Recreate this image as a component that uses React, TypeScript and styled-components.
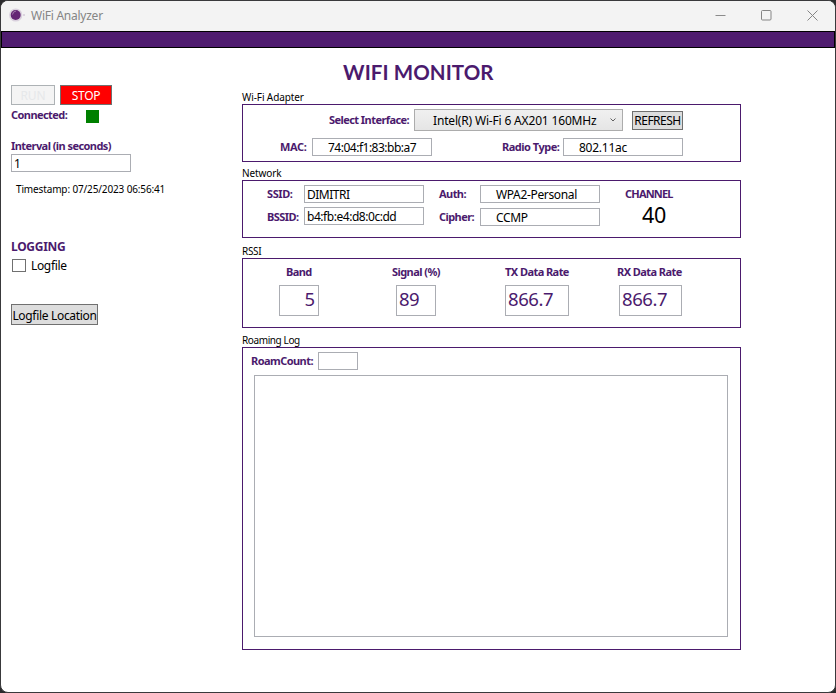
import React from "react";
import styled, { createGlobalStyle } from "styled-components";

const PURPLE = "#4b1a6d";

const GlobalStyle = createGlobalStyle`
  *, *::before, *::after { box-sizing: border-box; }
  html, body { margin: 0; padding: 0; background: #2b2b2d; overflow: hidden; }
  body { font-family: "Noto Sans", "Open Sans", sans-serif; font-size: 12px; color: #000; }
`;

const Window = styled.div`
  width: 836px;
  height: 693px;
  display: flex;
  flex-direction: column;
  border: 1px solid #39393b;
  border-radius: 8px;
  background: #fff;
  overflow: hidden;
`;

const TitleBar = styled.header`
  height: 30px;
  flex: none;
  display: flex;
  align-items: center;
  background: #f3f3f3;
  color: #858585;
  padding-left: 8px;
`;

const AppIcon = styled.svg`
  width: 17px;
  height: 16px;
  margin-right: 5px;
  margin-top: -2px;
`;

const WindowTitle = styled.span`
  flex: 1;
  font-size: 12px;
  line-height: 16px;
  letter-spacing: -0.25px;
`;

const WindowButton = styled.span`
  width: 46px;
  display: flex;
  justify-content: center;
  padding-left: 1px;
  padding-bottom: 1px;

  svg { display: block; }
`;

const Banner = styled.div`
  height: 17px;
  flex: none;
  background: #4f1c6f;
  border: 1px solid #000;
`;

const Body = styled.main`
  display: flex;
  flex: 1;
`;

const Sidebar = styled.aside`
  width: 241px;
  padding: 37px 0 0 10px;
`;

const Content = styled.section`
  width: 499px;
`;

type RowProps = { $h: number; $mt?: number; $align?: string };

const Row = styled.div<RowProps>`
  display: flex;
  align-items: ${(p) => p.$align ?? "center"};
  height: ${(p) => p.$h}px;
  margin-top: ${(p) => p.$mt ?? 0}px;
`;

type TextProps = { $w?: number; $ml?: number; $ls?: number; $size?: number; $mt?: number };

const Label = styled.span<TextProps>`
  flex: none;
  display: block;
  width: ${(p) => (p.$w ? `${p.$w}px` : "auto")};
  margin-left: ${(p) => p.$ml ?? 0}px;
  margin-top: ${(p) => p.$mt ?? 0}px;
  font-family: "Noto Sans", sans-serif;
  font-weight: 700;
  font-size: ${(p) => p.$size ?? 11}px;
  line-height: 16px;
  letter-spacing: ${(p) => p.$ls ?? -0.56}px;
  color: ${PURPLE};
  white-space: nowrap;
`;

const Text = styled.span<TextProps>`
  display: block;
  margin-left: ${(p) => p.$ml ?? 0}px;
  margin-top: ${(p) => p.$mt ?? 0}px;
  font-size: ${(p) => p.$size ?? 12}px;
  line-height: 16px;
  letter-spacing: ${(p) => p.$ls ?? -0.1}px;
  white-space: nowrap;
`;

const Heading = styled.h1`
  margin: 13px 0 0 101px;
  height: 23px;
  font-family: Lato, sans-serif;
  font-weight: 700;
  font-size: 20.5px;
  line-height: 23px;
  letter-spacing: 0.08px;
  color: ${PURPLE};
  white-space: nowrap;
`;

type FieldProps = { $w: number; $h?: number; $ml?: number; $mt?: number; $pad?: number; $ls?: number };

const Field = styled.div<FieldProps>`
  flex: none;
  width: ${(p) => p.$w}px;
  height: ${(p) => p.$h ?? 18}px;
  margin-left: ${(p) => p.$ml ?? 0}px;
  margin-top: ${(p) => p.$mt ?? 0}px;
  padding-left: ${(p) => p.$pad ?? 2}px;
  border: 1px solid #abadb3;
  background: #fff;
  font-size: 12px;
  line-height: 17px;
  letter-spacing: ${(p) => p.$ls ?? -0.1}px;
  white-space: nowrap;
`;

const Reading = styled(Field)<{ $right?: boolean }>`
  height: 31px;
  padding-right: 3px;
  text-align: ${(p) => (p.$right ? "right" : "left")};
  color: ${PURPLE};
  font-size: 18.5px;
  line-height: 26px;
`;

type ButtonProps = { $w: number; $h: number; $ml?: number; $ls?: number; $tone?: "stop" | "disabled" };

const Button = styled.button<ButtonProps>`
  flex: none;
  width: ${(p) => p.$w}px;
  height: ${(p) => p.$h}px;
  margin: 0 0 0 ${(p) => p.$ml ?? 0}px;
  padding: 2px 0 0;
  display: flex;
  align-items: center;
  justify-content: center;
  border: 1px solid ${(p) => (p.$tone === "disabled" ? "#adb2b5" : "#707070")};
  background: ${(p) => (p.$tone === "stop" ? "#ff0000" : p.$tone === "disabled" ? "#f4f4f4" : "#dddddd")};
  color: ${(p) => (p.$tone === "stop" ? "#fff" : p.$tone === "disabled" ? "#e6e8ea" : "#000")};
  font: 12px/16px "Noto Sans", sans-serif;
  letter-spacing: ${(p) => p.$ls ?? -0.1}px;
  white-space: nowrap;
`;

const StatusLight = styled.span`
  width: 13px;
  height: 13px;
  margin-left: 75px;
  background: #008000;
`;

const Checkbox = styled.span`
  width: 14px;
  height: 13px;
  margin-left: 1px;
  border: 1px solid #707070;
  background: #fff;
`;

const GroupTitle = styled.h2<{ $mt: number; $ls?: number }>`
  margin: ${(p) => p.$mt}px 0 0;
  height: 14px;
  font-weight: 400;
  font-size: 10px;
  line-height: 14px;
  letter-spacing: ${(p) => p.$ls ?? -0.1}px;
  white-space: nowrap;
`;

const Group = styled.div<{ $h: number }>`
  height: ${(p) => p.$h}px;
  border: 1px solid ${PURPLE};
`;

const Select = styled.div`
  flex: none;
  width: 209px;
  height: 22px;
  margin-left: 5px;
  padding: 0 5px 0 18px;
  display: flex;
  align-items: center;
  justify-content: space-between;
  border: 1px solid #acacac;
  background: linear-gradient(#f0f0f0, #e5e5e5);
  white-space: nowrap;
`;

const Columns = styled.div`
  display: flex;
`;

const Column = styled.div<{ $w: number; $ml?: number }>`
  width: ${(p) => p.$w}px;
  margin-left: ${(p) => p.$ml ?? 0}px;
  display: flex;
  flex-direction: column;
  flex: none;
`;

const LogArea = styled.div`
  width: 474px;
  height: 262px;
  margin: 5px 0 0 11px;
  border: 1px solid #abadb3;
`;

export default function App() {
  return (
    <>
      <GlobalStyle />
      <Window>
        <TitleBar>
          <AppIcon viewBox="0 0 17 16">
            <circle cx="6.7" cy="8" r="6.6" fill="#d9d0dd" />
            <circle cx="6.7" cy="8" r="5" fill="#642575" />
            <path d="M3.5 7.5A4 4 0 0 1 7 4" fill="none" stroke="#a27aac" />
            <path d="M14 8h2" stroke="#d5cbd9" strokeWidth="1.5" />
          </AppIcon>
          <WindowTitle>WiFi Analyzer</WindowTitle>
          <WindowButton>
            <svg width="11" height="11"><path d="M0.5 5.5h10" stroke="#8b8b8b" /></svg>
          </WindowButton>
          <WindowButton>
            <svg width="11" height="11"><rect x=".5" y=".5" width="9.5" height="9.5" rx="1" fill="none" stroke="#858585" /></svg>
          </WindowButton>
          <WindowButton>
            <svg width="11" height="11"><path d="M.5 .5l10 10M10.5 .5l-10 10" stroke="#858585" /></svg>
          </WindowButton>
        </TitleBar>
        <Banner />
        <Body>
          <Sidebar>
            <Row $h={20}>
              <Button $w={44} $h={20} $tone="disabled">RUN</Button>
              <Button $w={52} $h={20} $ml={5} $ls={-0.3} $tone="stop">STOP</Button>
            </Row>
            <Row $h={13} $mt={5}>
              <Label $w={0.01} $mt={-3}>Connected:</Label>
              <StatusLight />
            </Row>
            <Label $mt={15}>Interval (in seconds)</Label>
            <Field $w={120} $h={18}>1</Field>
            <Text $size={10} $ml={5} $mt={9} $ls={-0.14}>Timestamp: 07/25/2023 06:56:41</Text>
            <Label $mt={42} $size={12} $ls={-0.3}>LOGGING</Label>
            <Row $h={16} $mt={2}>
              <Checkbox />
              <Text $ml={5} $mt={2} $ls={-0.35}>Logfile</Text>
            </Row>
            <Row $h={21} $mt={31}>
              <Button $w={87} $h={21} $ls={-0.32}>Logfile Location</Button>
            </Row>
          </Sidebar>
          <Content>
            <Heading>WIFI MONITOR</Heading>
            <GroupTitle $mt={6}>Wi-Fi Adapter</GroupTitle>
            <Group $h={58}>
              <Row $h={22} $mt={4}>
                <Label $ml={86} $w={80}>Select Interface:</Label>
                <Select>
                  <Text $mt={2} $ls={-0.17}>Intel(R) Wi-Fi 6 AX201 160MHz</Text>
                  <svg width="8" height="6"><path d="M1.5 1.5l2.5 2.5 2.5-2.5" fill="none" stroke="#606060" /></svg>
                </Select>
                <Button $w={51} $h={19} $ml={9} $ls={-0.5}>REFRESH</Button>
              </Row>
              <Row $h={18} $mt={7}>
                <Label $ml={37} $w={28} $ls={-0.4}>MAC:</Label>
                <Field $w={120} $ml={4} $pad={15} $ls={-0.5}>74:04:f1:83:bb:a7</Field>
                <Label $ml={70} $w={58} $ls={-0.5}>Radio Type:</Label>
                <Field $w={120} $ml={3} $pad={15} $ls={-0.25}>802.11ac</Field>
              </Row>
            </Group>
            <GroupTitle $mt={4}>Network</GroupTitle>
            <Group $h={58}>
              <Row $h={18} $mt={4}>
                <Label $ml={24} $w={32} $ls={-0.4}>SSID:</Label>
                <Field $w={120} $ml={5} $ls={-0.5}>DIMITRI</Field>
                <Label $ml={15} $w={37}>Auth:</Label>
                <Field $w={120} $ml={4} $pad={15} $ls={-0.35}>WPA2-Personal</Field>
                <Label $ml={25} $w={48} $ls={-0.8}>CHANNEL</Label>
              </Row>
              <Row $h={19} $mt={4} $align="flex-start">
                <Label $ml={24} $w={32} $mt={2}>BSSID:</Label>
                <Field $w={120} $ml={5} $ls={-0.46}>b4:fb:e4:d8:0c:dd</Field>
                <Label $ml={15} $w={37} $mt={2}>Cipher:</Label>
                <Field $w={120} $ml={4} $mt={1} $pad={15} $ls={-0.35}>CCMP</Field>
                <Text $ml={42} $size={21.5} $ls={-0.4}>40</Text>
              </Row>
            </Group>
            <GroupTitle $mt={6} $ls={-0.3}>RSSI</GroupTitle>
            <Group $h={70}>
              <Columns>
                <Column $w={40} $ml={36}>
                  <Label $ml={7} $mt={5}>Band</Label>
                  <Reading $w={40} $mt={5} $right>5</Reading>
                </Column>
                <Column $w={48} $ml={73}>
                  <Label $mt={5}>Signal (%)</Label>
                  <Reading $w={40} $ml={4} $mt={5} $ls={-0.5}>89</Reading>
                </Column>
                <Column $w={64} $ml={65}>
                  <Label $mt={5}>TX Data Rate</Label>
                  <Reading $w={64} $mt={5} $ls={-0.4}>866.7</Reading>
                </Column>
                <Column $w={65} $ml={48}>
                  <Label $mt={5}>RX Data Rate</Label>
                  <Reading $w={63} $ml={2} $mt={5} $ls={-0.4}>866.7</Reading>
                </Column>
              </Columns>
            </Group>
            <GroupTitle $mt={5} $ls={-0.4}>Roaming Log</GroupTitle>
            <Group $h={303}>
              <Row $h={18} $mt={4}>
                <Label $ml={8} $w={62}>RoamCount:</Label>
                <Field $w={40} $ml={5} />
              </Row>
              <LogArea />
            </Group>
          </Content>
        </Body>
      </Window>
    </>
  );
}
